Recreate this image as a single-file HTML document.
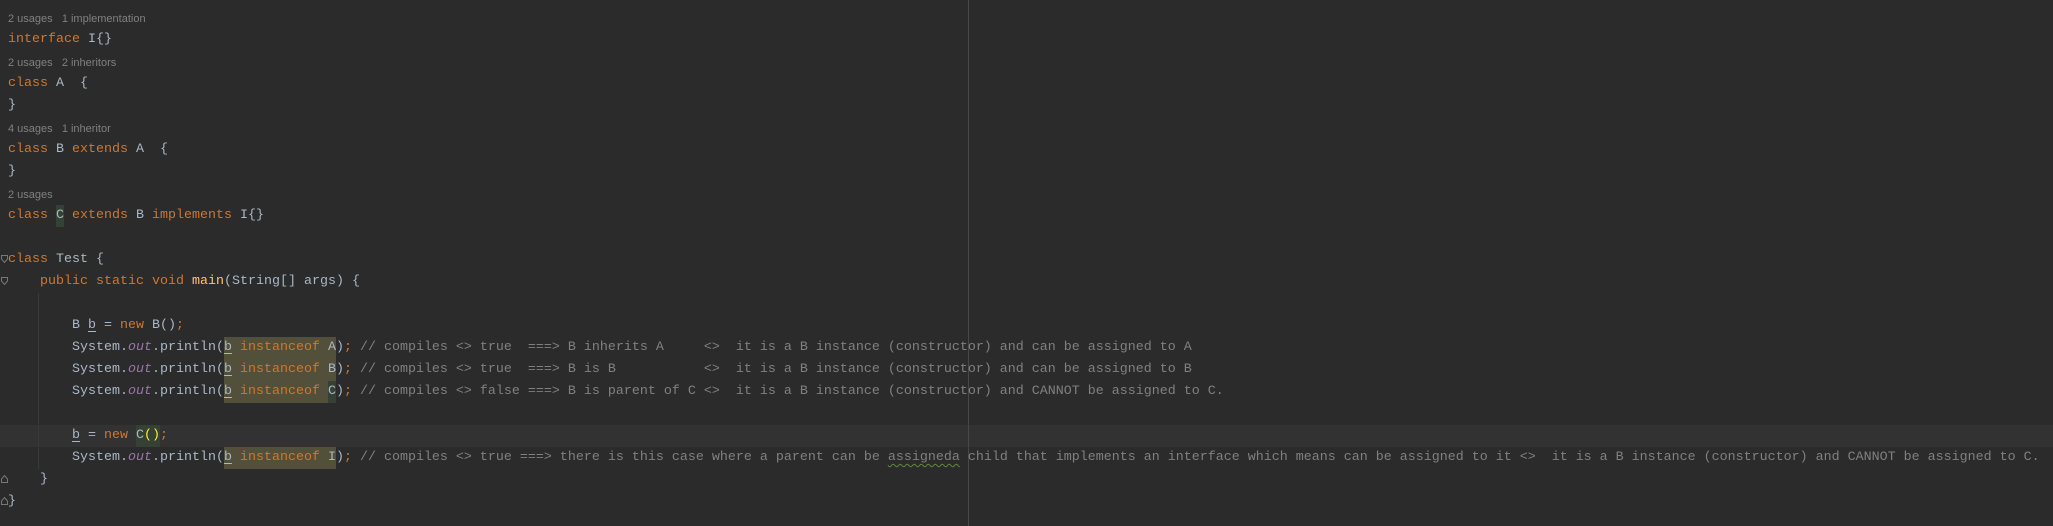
<!DOCTYPE html>
<html><head><meta charset="utf-8"><style>
html,body{margin:0;padding:0;background:#2b2b2b;width:2053px;height:526px;overflow:hidden;position:relative}
.code{position:absolute;left:8px;top:7px;font-family:"Liberation Mono",monospace;font-size:13.33px;color:#a9b7c6;}
.l{height:22px;line-height:22px;white-space:pre;position:relative}
.h{font-family:"Liberation Sans",sans-serif;font-size:11px;color:#808080;height:22px;line-height:24px;white-space:pre}
.k{color:#cc7832}.c{color:#808080}.o{color:#9876aa;font-style:italic}.m{color:#ffc66d}
.hl{background:#52503a;display:inline-block;height:22px;vertical-align:top}
.g{background:#344134;display:inline-block;height:22px;vertical-align:top}
.u{text-decoration:underline;text-underline-offset:3px}
.w{text-decoration:underline wavy #5f8a3a;text-decoration-thickness:1px;text-underline-offset:3px}
.cur{position:absolute;left:0;width:2053px;top:425px;height:22px;background:#323232}
.margin{position:absolute;left:968px;top:0;width:1px;height:526px;background:#484848}
.guide{position:absolute;left:38px;top:293px;width:1px;height:176px;background:#393939}
.fold{position:absolute;left:1px;width:7px;height:8px}
</style></head><body>
<div class="cur"></div>
<div class="margin"></div>
<div class="guide"></div>
<svg class="fold" style="top:255px" viewBox="0 0 7 8"><path d="M0.5 0.5H6.5V4L3.5 7.5L0.5 4Z" fill="none" stroke="#777" stroke-width="1"/></svg>
<svg class="fold" style="top:277px" viewBox="0 0 7 8"><path d="M0.5 0.5H6.5V4L3.5 7.5L0.5 4Z" fill="none" stroke="#777" stroke-width="1"/></svg>
<svg class="fold" style="top:475px" viewBox="0 0 7 8"><path d="M0.5 7.5H6.5V4L3.5 0.5L0.5 4Z" fill="none" stroke="#777" stroke-width="1"/></svg>
<svg class="fold" style="top:497px" viewBox="0 0 7 8"><path d="M0.5 7.5H6.5V4L3.5 0.5L0.5 4Z" fill="none" stroke="#777" stroke-width="1"/></svg>
<div class="code">
<div class="h">2 usages   1 implementation</div>
<div class="l"><span class="k">interface</span> I{}</div>
<div class="h">2 usages   2 inheritors</div>
<div class="l"><span class="k">class</span> A  {</div>
<div class="l">}</div>
<div class="h">4 usages   1 inheritor</div>
<div class="l"><span class="k">class</span> B <span class="k">extends</span> A  {</div>
<div class="l">}</div>
<div class="h">2 usages</div>
<div class="l"><span class="k">class</span> <span class="g">C</span> <span class="k">extends</span> B <span class="k">implements</span> I{}</div>
<div class="l"> </div>
<div class="l"><span class="k">class</span> Test {</div>
<div class="l">    <span class="k">public static void</span> <span class="m">main</span>(String[] args) {</div>
<div class="l"> </div>
<div class="l">        B <span class="u">b</span> = <span class="k">new</span> B()<span class="k">;</span></div>
<div class="l">        System.<span class="o">out</span>.println(<span class="hl"><span class="u">b</span> <span class="k">instanceof</span> A</span>)<span class="k">;</span> <span class="c">// compiles &lt;&gt; true  ===&gt; B inherits A     &lt;&gt;  it is a B instance (constructor) and can be assigned to A</span></div>
<div class="l">        System.<span class="o">out</span>.println(<span class="hl"><span class="u">b</span> <span class="k">instanceof</span> B</span>)<span class="k">;</span> <span class="c">// compiles &lt;&gt; true  ===&gt; B is B           &lt;&gt;  it is a B instance (constructor) and can be assigned to B</span></div>
<div class="l">        System.<span class="o">out</span>.println(<span class="hl"><span class="u">b</span> <span class="k">instanceof</span> </span><span class="g">C</span>)<span class="k">;</span> <span class="c">// compiles &lt;&gt; false ===&gt; B is parent of C &lt;&gt;  it is a B instance (constructor) and CANNOT be assigned to C.</span></div>
<div class="l"> </div>
<div class="l">        <span class="u">b</span> = <span class="k">new</span> <span class="g">C<span style="color:#ffef28">()</span></span><span class="k">;</span></div>
<div class="l">        System.<span class="o">out</span>.println(<span class="hl"><span class="u">b</span> <span class="k">instanceof</span> I</span>)<span class="k">;</span> <span class="c">// compiles &lt;&gt; true ===&gt; there is this case where a parent can be <span class="w">assigneda</span> child that implements an interface which means can be assigned to it &lt;&gt;  it is a B instance (constructor) and CANNOT be assigned to C.</span></div>
<div class="l">    }</div>
<div class="l">}</div>
</div>
</body></html>
